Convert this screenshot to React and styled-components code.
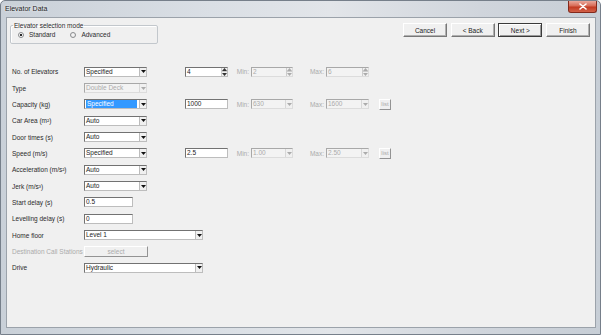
import React from "react";
import styled, { createGlobalStyle } from "styled-components";

const GlobalStyle = createGlobalStyle`
  html, body { margin: 0; padding: 0; background: #ffffff; }
  body { font-family: "Liberation Sans", Arial, sans-serif; }
  * { box-sizing: border-box; }
`;

const Window = styled.div`
  width: 601px;
  height: 335px;
  display: flex;
  flex-direction: column;
  background: linear-gradient(90deg, #c9d0d8 0%, #dadfe5 35%, #e2e5e9 55%, #d0d5dc 80%, #c7ced6 100%);
  border: 1px solid #767f8a;
  border-radius: 5px 5px 0 0;
  overflow: hidden;
`;

const TitleBar = styled.div`
  height: 16px;
  flex: none;
  display: flex;
  align-items: flex-start;
`;

const Title = styled.div`
  padding-left: 4px;
  line-height: 15px;
  font-size: 7px;
  color: #262626;
  text-shadow: 0 0 3px #ffffff;
`;

const CloseButton = styled.div`
  margin-left: auto;
  margin-right: 3px;
  width: 29px;
  height: 12px;
  display: flex;
  align-items: center;
  justify-content: center;
  background: linear-gradient(180deg, #e9a89c 0%, #d66a56 45%, #c23a22 55%, #d2624a 100%);
  border: 1px solid #83291c;
  border-top: none;
  border-radius: 0 0 3px 3px;
`;

const Client = styled.div`
  flex: 1;
  margin: 0 4px 6px 5px;
  background: #f0f0f0;
  border: 1px solid #9ba2aa;
  display: flex;
  flex-direction: column;
`;

const Header = styled.div`
  display: flex;
  justify-content: space-between;
  align-items: flex-start;
  padding: 4px 5px 0 3px;
  height: 27px;
`;

const GroupBox = styled.fieldset`
  margin: 0;
  width: 148px;
  padding: 0 2px 3px 2px;
  border: 1px solid #c2c7cc;
  border-radius: 2px;
  box-shadow: inset 1px 1px #ffffff;

  legend {
    font-size: 6.5px;
    line-height: 7px;
    padding: 0 1px;
    color: #2b2b2b;
  }
`;

const RadioRow = styled.div`
  display: flex;
  align-items: center;
  height: 11px;
  padding-left: 5px;
  gap: 15px;
`;

const RadioItem = styled.label`
  display: flex;
  align-items: center;
  gap: 5px;
  font-size: 6.5px;
  color: #2b2b2b;
`;

const RadioDot = styled.span`
  width: 6px;
  height: 6px;
  border-radius: 50%;
  border: 1px solid #8a8c8e;
  background: radial-gradient(circle, ${(p) => (p.$on ? "#2a2a2a 0 1.2px, #f6f6f6 1.4px" : "#f8f8f8 0, #e6e6e6 100%")});
`;

const ButtonBar = styled.div`
  display: flex;
  gap: 3.67px;
  margin-top: 1px;
`;

const PushButton = styled.div`
  width: 44px;
  height: 14px;
  display: flex;
  align-items: center;
  justify-content: center;
  font-size: 6.5px;
  color: #222;
  background: #f0f0f0;
  border: 1px solid;
  border-color: ${(p) => (p.$default ? "#3a3a3a" : "#ffffff #777777 #777777 #ffffff")};
  box-shadow: ${(p) =>
    p.$default ? "inset 1px 1px #ffffff, inset -1px -1px #9a9a9a" : "inset -1px -1px #b0b0b0"};
`;

const Form = styled.div`
  margin-top: 18.6px;
  padding-left: 5px;
  display: flex;
  flex-direction: column;
`;

const Row = styled.div`
  display: grid;
  grid-template-columns: 72px 101px auto;
  align-items: center;
  height: 16.33px;
`;

const Label = styled.div`
  font-size: 6.5px;
  white-space: nowrap;
  color: ${(p) => (p.$disabled ? "#ababab" : "#2b2b2b")};
`;

const Field = styled.div`
  width: ${(p) => p.$w}px;
  height: 10px;
  display: flex;
  align-items: stretch;
  border: 1px solid;
  border-color: ${(p) => (p.$disabled ? "#a8a8a8 #dcdcdc #dcdcdc #a8a8a8" : "#727272 #bdbdbd #bdbdbd #727272")};
  background: ${(p) => (p.$disabled ? "#f3f3f3" : "#ffffff")};
`;

const FieldText = styled.div`
  flex: 1;
  margin: ${(p) => (p.$sel ? "0 2px 0 1px" : "0")};
  padding: 0 1px;
  font-size: 6.5px;
  line-height: 8px;
  white-space: nowrap;
  overflow: hidden;
  background: ${(p) => (p.$sel ? "#3399ff" : "transparent")};
  color: ${(p) => (p.$sel ? "#ffffff" : p.$disabled ? "#ababab" : "#1c1c1c")};
`;

const DropBtn = styled.div`
  width: 7px;
  display: flex;
  align-items: center;
  justify-content: center;
  background: #f0f0f0;
  border-left: 1px solid ${(p) => (p.$disabled ? "#d8d8d8" : "#bcbcbc")};
`;

const SpinBtn = styled.div`
  width: 6px;
  display: flex;
  flex-direction: column;
  background: #f0f0f0;
  border-left: 1px solid #cccccc;

  span {
    flex: 1;
    display: flex;
    align-items: center;
    justify-content: center;
  }
  span + span {
    border-top: 1px solid #cccccc;
  }
`;

const Extra = styled.div`
  display: flex;
  align-items: center;
`;

const SideLabel = styled.div`
  width: ${(p) => p.$w}px;
  padding-right: 2px;
  text-align: right;
  font-size: 6.5px;
  color: #ababab;
`;

const ListButton = styled.div`
  margin-left: 10px;
  width: 12px;
  height: 11px;
  display: flex;
  align-items: center;
  justify-content: center;
  font-size: 6px;
  color: #ababab;
  background: #f0f0f0;
  border: 1px solid;
  border-color: #ffffff #939393 #939393 #ffffff;
`;

const FlatButton = styled.div`
  width: 64px;
  height: 10.5px;
  display: flex;
  align-items: center;
  justify-content: center;
  font-size: 6.5px;
  color: #ababab;
  background: #f0f0f0;
  border: 1px solid;
  border-color: #ffffff #939393 #939393 #ffffff;
`;

const Tri = ({ up, color }) => (
  <svg width="5" height="3" viewBox="0 0 5 3">
    <polygon points={up ? "2.5,0 5,3 0,3" : "0,0 5,0 2.5,3"} fill={color} />
  </svg>
);

const Select = ({ w, value, disabled, sel }) => (
  <Field $w={w} $disabled={disabled}>
    <FieldText $sel={sel} $disabled={disabled}>{value}</FieldText>
    <DropBtn $disabled={disabled}>
      <Tri color={disabled ? "#ababab" : "#111"} />
    </DropBtn>
  </Field>
);

const Spin = ({ w, value, disabled }) => (
  <Field $w={w} $disabled={disabled}>
    <FieldText $disabled={disabled}>{value}</FieldText>
    <SpinBtn>
      <span><Tri up color={disabled ? "#ababab" : "#333"} /></span>
      <span><Tri color={disabled ? "#ababab" : "#333"} /></span>
    </SpinBtn>
  </Field>
);

const Text = ({ w, value }) => (
  <Field $w={w}>
    <FieldText>{value}</FieldText>
  </Field>
);

const Range = ({ value, min, max, spin }) => (
  <Extra>
    {spin ? <Spin w={43} value={value} /> : <Text w={43} value={value} />}
    <SideLabel $w={23}>Min:</SideLabel>
    {spin ? <Spin w={42} value={min} disabled /> : <Select w={42} value={min} disabled />}
    <SideLabel $w={33}>Max:</SideLabel>
    {spin ? <Spin w={43} value={max} disabled /> : <Select w={43} value={max} disabled />}
    {!spin && <ListButton>list</ListButton>}
  </Extra>
);

export default function App() {
  return (
    <>
      <GlobalStyle />
      <Window>
        <TitleBar>
          <Title>Elevator Data</Title>
          <CloseButton>
            <svg width="8" height="7" viewBox="0 0 8 7">
              <path d="M1 1 L7 6 M7 1 L1 6" stroke="#ffffff" strokeWidth="1.6" strokeLinecap="round" />
            </svg>
          </CloseButton>
        </TitleBar>
        <Client>
          <Header>
            <GroupBox>
              <legend>Elevator selection mode</legend>
              <RadioRow>
                <RadioItem><RadioDot $on />Standard</RadioItem>
                <RadioItem><RadioDot />Advanced</RadioItem>
              </RadioRow>
            </GroupBox>
            <ButtonBar>
              <PushButton>Cancel</PushButton>
              <PushButton>&lt; Back</PushButton>
              <PushButton $default>Next &gt;</PushButton>
              <PushButton>Finish</PushButton>
            </ButtonBar>
          </Header>
          <Form>
            <Row>
              <Label>No. of Elevators</Label>
              <Select w={63} value="Specified" />
              <Range spin value="4" min="2" max="6" />
            </Row>
            <Row>
              <Label>Type</Label>
              <Select w={63} value="Double Deck" disabled />
            </Row>
            <Row>
              <Label>Capacity (kg)</Label>
              <Select w={63} value="Specified" sel />
              <Range value="1000" min="630" max="1600" />
            </Row>
            <Row>
              <Label>Car Area (m²)</Label>
              <Select w={63} value="Auto" />
            </Row>
            <Row>
              <Label>Door times (s)</Label>
              <Select w={63} value="Auto" />
            </Row>
            <Row>
              <Label>Speed (m/s)</Label>
              <Select w={63} value="Specified" />
              <Range value="2.5" min="1.00" max="2.50" />
            </Row>
            <Row>
              <Label>Acceleration (m/s²)</Label>
              <Select w={63} value="Auto" />
            </Row>
            <Row>
              <Label>Jerk (m/s³)</Label>
              <Select w={63} value="Auto" />
            </Row>
            <Row>
              <Label>Start delay (s)</Label>
              <Text w={49} value="0.5" />
            </Row>
            <Row>
              <Label>Levelling delay (s)</Label>
              <Text w={49} value="0" />
            </Row>
            <Row>
              <Label>Home floor</Label>
              <Select w={119} value="Level 1" />
            </Row>
            <Row>
              <Label $disabled>Destination Call Stations</Label>
              <FlatButton>select</FlatButton>
            </Row>
            <Row>
              <Label>Drive</Label>
              <Select w={119} value="Hydraulic" />
            </Row>
          </Form>
        </Client>
      </Window>
    </>
  );
}
